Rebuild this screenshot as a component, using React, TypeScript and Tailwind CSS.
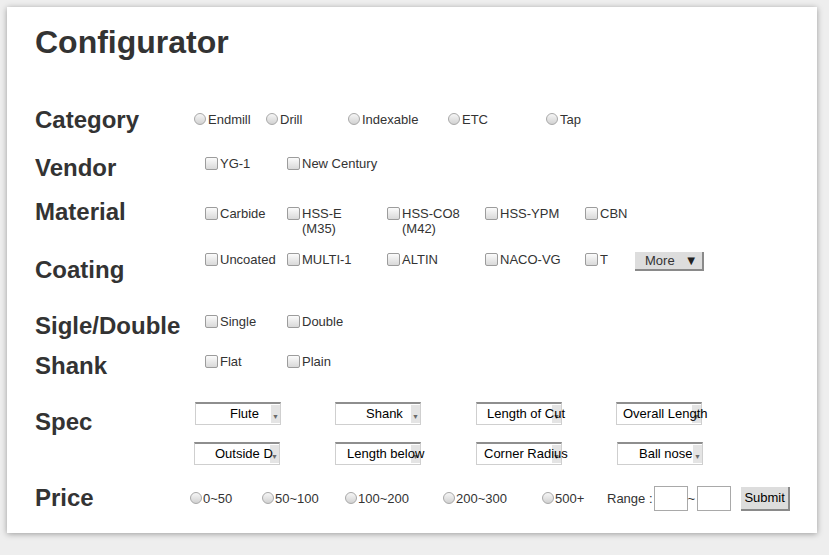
import type { ReactNode } from "react";

const FONT = "font-['Liberation_Sans',Arial,Helvetica,sans-serif]";

function Radio() {
  return (
    <span className="mt-[1px] h-[12px] w-[12px] shrink-0 rounded-full border border-[#a8a8a8] bg-linear-to-b from-[#f6f6f6] to-[#d2d2d2]" />
  );
}

function Check() {
  return (
    <span className="mt-[1px] h-[13px] w-[13px] shrink-0 rounded-[2px] border border-[#9c9c9c] bg-linear-to-b from-[#fbfbfb] to-[#d9d9d9]" />
  );
}

interface OptProps {
  w: string;
  gap?: string;
  children: ReactNode;
}

function RadioOpt({ w, gap = "gap-[2px]", children }: OptProps) {
  return (
    <label className={`flex shrink-0 items-start ${gap} ${w}`}>
      <Radio />
      <span>{children}</span>
    </label>
  );
}

function CheckOpt({ w, children }: OptProps) {
  return (
    <label className={`flex shrink-0 items-start gap-[2px] ${w}`}>
      <Check />
      <span>{children}</span>
    </label>
  );
}

interface SelectProps {
  text: string;
  pad: string;
}

// the arrow sits under the text, like the old browser select did
function FakeSelect({ text, pad }: SelectProps) {
  return (
    <div className="relative h-[23px] w-[86px] shrink-0 border border-[#cfcfcf] border-t-2 border-t-[#8e8e8e] bg-white">
      <span className="absolute top-[1px] right-0 bottom-[1px] flex w-[9px] items-end justify-center bg-[#e4e4e4] pb-[3px] text-[7px] leading-none text-[#6a6a6a]">
        ▼
      </span>
      <div className={`relative flex h-full items-center whitespace-nowrap pb-[1px] text-[13px] text-black ${pad}`}>
        {text}
      </div>
    </div>
  );
}

const LABEL = "text-[24px] font-bold leading-[28px] text-[#333]";

export default function App() {
  return (
    <div className={`h-[555px] w-[829px] bg-[#eeeeee] pt-[7px] pl-[7px] ${FONT}`}>
      <div className="h-[526px] w-[810px] bg-white pt-[17px] pl-[28px] shadow-[0_1px_6px_rgba(0,0,0,0.35)]">
        <h1 className="text-[32px] font-bold leading-[37px] text-[#333]">Configurator</h1>

        <div className="mt-[45px] flex flex-col text-[13px] leading-[15px] text-[#333]">
          {/* Category */}
          <div className="flex h-[48px] items-start">
            <div className={`w-[159px] shrink-0 ${LABEL}`}>Category</div>
            <div className="flex pt-[6px]">
              <RadioOpt w="w-[72px]">Endmill</RadioOpt>
              <RadioOpt w="w-[82px]">Drill</RadioOpt>
              <RadioOpt w="w-[100px]">Indexable</RadioOpt>
              <RadioOpt w="w-[98px]">ETC</RadioOpt>
              <RadioOpt w="w-[60px]">Tap</RadioOpt>
            </div>
          </div>

          {/* Vendor */}
          <div className="flex h-[44px] items-start">
            <div className={`w-[170px] shrink-0 ${LABEL}`}>Vendor</div>
            <div className="flex pt-[2px]">
              <CheckOpt w="w-[82px]">YG-1</CheckOpt>
              <CheckOpt w="w-[100px]">New Century</CheckOpt>
            </div>
          </div>

          {/* Material */}
          <div className="flex h-[54px] items-start">
            <div className={`w-[170px] shrink-0 ${LABEL}`}>Material</div>
            <div className="flex pt-[8px]">
              <CheckOpt w="w-[82px]">Carbide</CheckOpt>
              <CheckOpt w="w-[100px]">
                HSS-E
                <br />
                (M35)
              </CheckOpt>
              <CheckOpt w="w-[98px]">
                HSS-CO8
                <br />
                (M42)
              </CheckOpt>
              <CheckOpt w="w-[100px]">HSS-YPM</CheckOpt>
              <CheckOpt w="w-[50px]">CBN</CheckOpt>
            </div>
          </div>

          {/* Coating */}
          <div className="flex h-[59px] items-start">
            <div className={`w-[170px] shrink-0 pt-[4px] ${LABEL}`}>Coating</div>
            <div className="flex">
              <CheckOpt w="w-[82px]">Uncoated</CheckOpt>
              <CheckOpt w="w-[100px]">MULTI-1</CheckOpt>
              <CheckOpt w="w-[98px]">ALTIN</CheckOpt>
              <CheckOpt w="w-[100px]">NACO-VG</CheckOpt>
              <CheckOpt w="w-[50px]">T</CheckOpt>
              <button
                type="button"
                className="flex h-[19px] w-[69px] items-center border-r-2 border-b-2 border-[#8a8a8a] bg-[#dddddd] pl-[10px] text-[13px] leading-none text-[#333]"
              >
                <span>More</span>
                <span className="ml-[10px] text-[13px] text-[#222]">▼</span>
              </button>
            </div>
          </div>

          {/* Sigle/Double */}
          <div className="flex h-[40px] items-start">
            <div className={`w-[170px] shrink-0 pt-[1px] ${LABEL}`}>Sigle/Double</div>
            <div className="flex pt-[3px]">
              <CheckOpt w="w-[82px]">Single</CheckOpt>
              <CheckOpt w="w-[100px]">Double</CheckOpt>
            </div>
          </div>

          {/* Shank */}
          <div className="flex h-[52px] items-start">
            <div className={`w-[170px] shrink-0 pt-[1px] ${LABEL}`}>Shank</div>
            <div className="flex pt-[3px]">
              <CheckOpt w="w-[82px]">Flat</CheckOpt>
              <CheckOpt w="w-[100px]">Plain</CheckOpt>
            </div>
          </div>

          {/* Spec */}
          <div className="flex h-[81px] items-start">
            <div className={`w-[160px] shrink-0 pt-[5px] ${LABEL}`}>Spec</div>
            <div className="-mt-[1px] flex flex-col gap-[17px]">
              <div className="flex">
                <div className="w-[140px]">
                  <FakeSelect text="Flute" pad="pl-[34px]" />
                </div>
                <div className="w-[141px]">
                  <FakeSelect text="Shank" pad="pl-[30px]" />
                </div>
                <div className="w-[140px]">
                  <FakeSelect text="Length of Cut" pad="pl-[10px]" />
                </div>
                <FakeSelect text="Overall Length" pad="pl-[6px]" />
              </div>
              <div className="-ml-[1px] flex">
                <div className="w-[141px]">
                  <FakeSelect text="Outside D" pad="pl-[20px]" />
                </div>
                <div className="w-[141px]">
                  <FakeSelect text="Length below" pad="pl-[11px]" />
                </div>
                <div className="w-[141px]">
                  <FakeSelect text="Corner Radius" pad="pl-[7px]" />
                </div>
                <FakeSelect text="Ball nose" pad="pl-[21px]" />
              </div>
            </div>
          </div>

          {/* Price */}
          <div className="flex h-[28px] items-start">
            <div className={`w-[155px] shrink-0 ${LABEL}`}>Price</div>
            <div className="mt-[2px] flex h-[25px] items-center">
              <RadioOpt w="w-[72px]" gap="gap-[1px]">0~50</RadioOpt>
              <RadioOpt w="w-[83px]" gap="gap-[1px]">50~100</RadioOpt>
              <RadioOpt w="w-[98px]" gap="gap-[1px]">100~200</RadioOpt>
              <RadioOpt w="w-[99px]" gap="gap-[1px]">200~300</RadioOpt>
              <RadioOpt w="w-[65px]" gap="gap-[1px]">500+</RadioOpt>
              <span>Range :</span>
              <input className="ml-[1px] h-[25px] w-[34px] border border-[#a9a9a9] bg-white" />
              <span>~</span>
              <input className="ml-[2px] h-[25px] w-[34px] border border-[#a9a9a9] bg-white" />
              <button
                type="button"
                className="ml-[10px] h-[24px] w-[49px] border-r-2 border-b-2 border-[#8a8a8a] bg-[#dddddd] text-[13px] text-black"
              >
                Submit
              </button>
            </div>
          </div>
        </div>
      </div>
    </div>
  );
}
